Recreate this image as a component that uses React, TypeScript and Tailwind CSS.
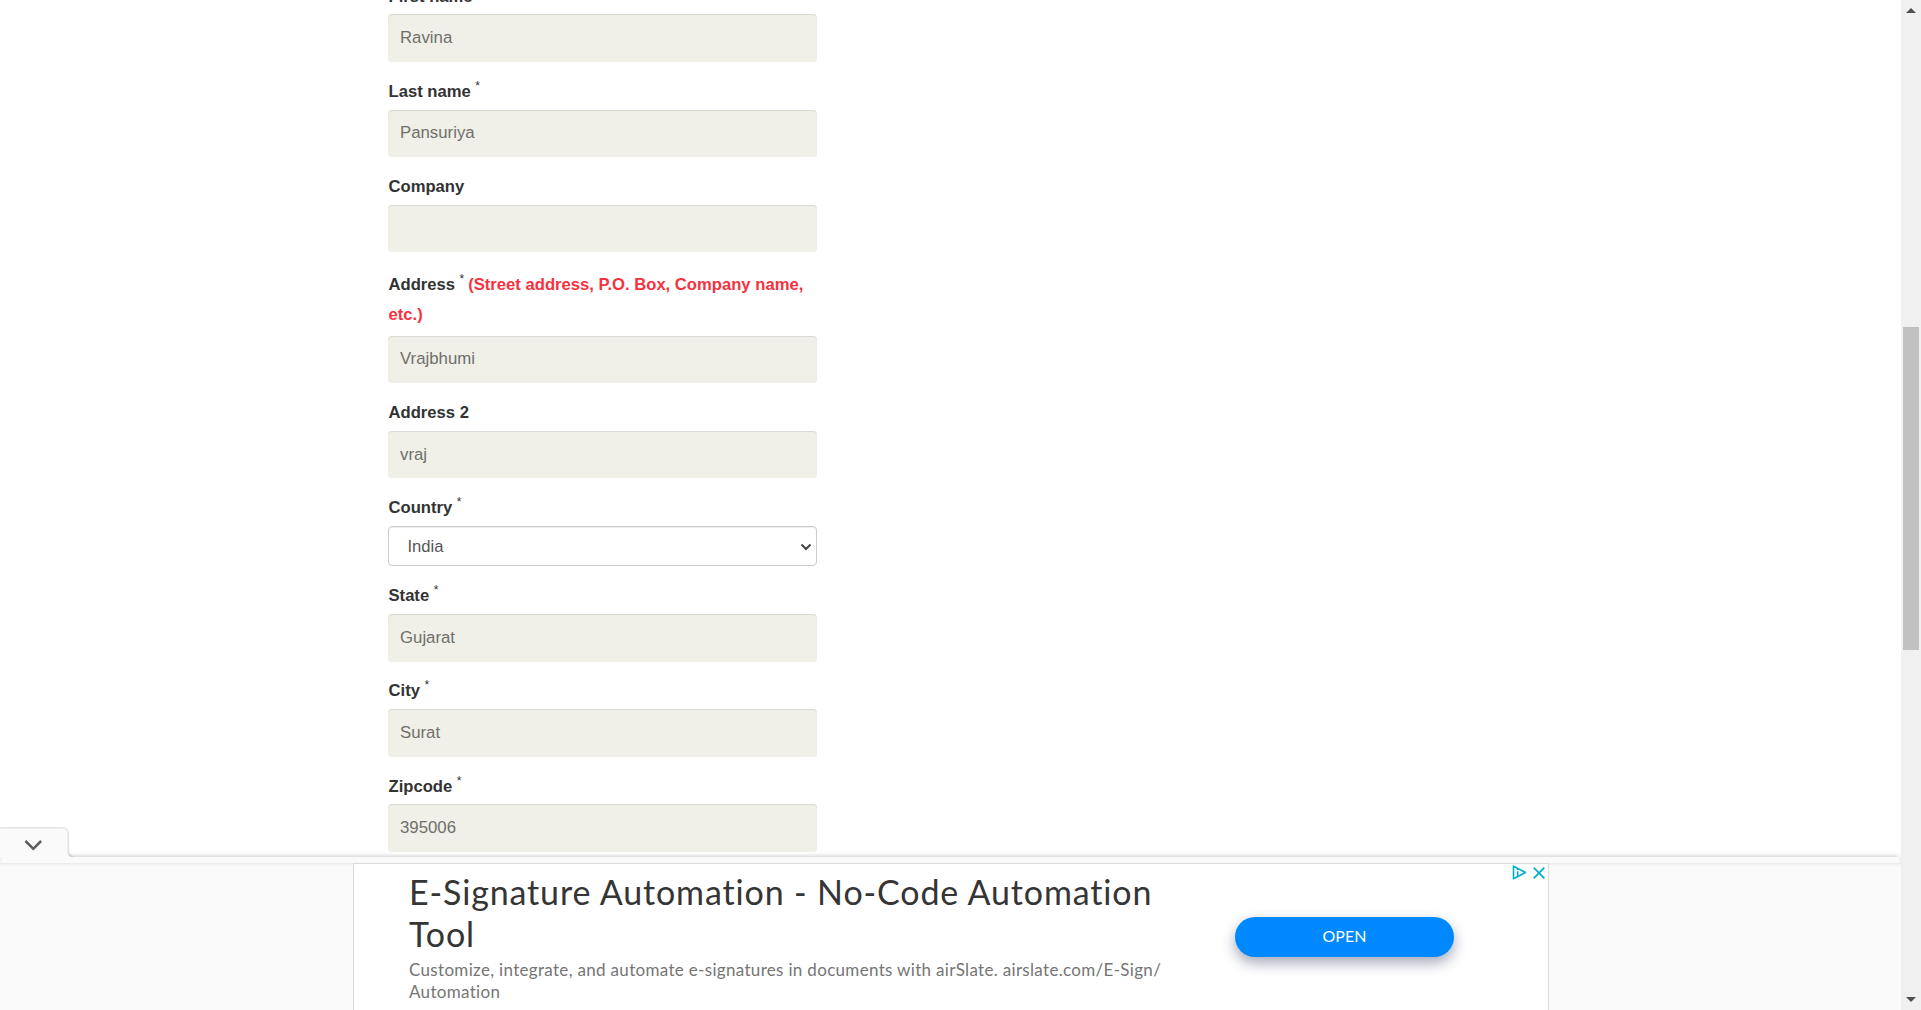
type FieldProps = {
  label: string;
  required?: boolean;
  hint?: string;
  value?: string;
  labelClass?: string;
  inputClass?: string;
  select?: boolean;
};

function Field({ label, required, hint, value, labelClass = "h-12 pb-[3px]", inputClass = "h-[47px]", select }: FieldProps) {
  return (
    <div className="w-[429px]">
      <div className={`flex flex-col justify-end pl-[0.5px] ${labelClass}`}>
        <label className="block text-[16.64px] leading-[30px] font-bold text-[#333]">
          {label}
          {required && <span className="relative -top-[7px] ml-[4.5px] text-[12px] leading-none font-normal">*</span>}
          {hint && <span className="ml-1 text-[#f5333f]">{hint}</span>}
        </label>
      </div>
      {select ? (
        <div className={`flex items-center justify-between rounded-[4px] border border-[#ccc] bg-white pr-1 pl-[18.5px] text-[16.6px] text-[#555] shadow-[inset_0_1px_1px_rgba(0,0,0,0.075)] ${inputClass}`}>
          <span className="pt-[2px]">{value}</span>
          <svg width="12" height="8" viewBox="0 0 12 8" fill="none" stroke="#444" strokeWidth="2">
            <path d="M1.5 1.5 6 6l4.5-4.5" />
          </svg>
        </div>
      ) : (
        <div className={`flex items-center rounded-[4px] bg-[#f0efe8] pl-3 text-[16.8px] text-[#6f6f6b] shadow-[inset_0_1px_1px_rgba(0,0,0,0.1)] ${inputClass}`}>
          {value}
        </div>
      )}
    </div>
  );
}

function Scrollbar() {
  return (
    <div className="flex h-full w-5 shrink-0 flex-col items-center bg-[#f0f0f0]">
      <svg className="mt-2 shrink-0" width="10" height="5" viewBox="0 0 10 5">
        <path d="M5 0 10 5H0z" fill="#505050" />
      </svg>
      <div className="mt-[314px] h-[323px] w-4 bg-[#c1c1c1]" />
      <svg className="mt-auto mb-2 shrink-0" width="10" height="5" viewBox="0 0 10 5">
        <path d="M0 0h10L5 5z" fill="#505050" />
      </svg>
    </div>
  );
}

function AdBar() {
  return (
    <div className="absolute bottom-0 left-0 w-[1901px]">
      <div className="relative z-10 flex h-[30px] w-[80px] overflow-hidden">
        <svg width="80" height="30" viewBox="0 0 80 30" fill="none">
          <defs>
            <filter id="tab" x="-10%" y="-20%" width="130%" height="140%">
              <feDropShadow dx="0" dy="0" stdDeviation="1.2" floodOpacity="0.5" />
            </filter>
          </defs>
          <path d="M-5 40V6Q-5 1.500 2 1.500H62Q67.500 1.500 67.500 7V24Q67.500 30 73 30V40Z" fill="#fafafa" filter="url(#tab)" />
          <path d="M25.500 14 33.300 21.800 41.100 14" stroke="#5c5c5c" strokeWidth="2.500" />
        </svg>
      </div>
      <div className="h-[6px] bg-[#fafafa]">
        <div className="mx-[2px] h-full bg-[#fafafa] shadow-[0_-1px_5px_-1px_rgba(0,0,0,0.3)]" />
      </div>
      <div className="relative flex h-[147px] bg-[#fafafa] bg-[linear-gradient(#e8e8e8,#f3f3f3_1.5px,#fafafa_4px)] pl-[353px]">
        <div className="relative flex w-[1196px] border-x border-t border-[#dcdcdc] bg-white pl-[55px]">
          <div className="w-[800px] shrink-0 whitespace-nowrap font-[Lato,sans-serif]">
            <h2 className="mt-[7px] text-[34px] leading-[42px] tracking-[0.86px] text-[#353535]">
              E-Signature Automation - No-Code Automation
              <br />
              Tool
            </h2>
            <p className="mt-1 text-[17px] leading-[22px] tracking-[0.32px] text-[#757575]">
              Customize, integrate, and automate e-signatures in documents with airSlate. airslate.com/E-Sign/
              <br />
              Automation
            </p>
          </div>
          <button className="mt-[53px] ml-[26px] h-10 w-[219px] rounded-[20px] bg-[#0088ff] pb-[2px] font-[Lato,sans-serif] text-[16px] text-white shadow-[0_6px_14px_rgba(30,40,80,0.4)]">
            OPEN
          </button>
          <div className="absolute top-[1px] right-[3px] flex items-center gap-[6px]">
            <svg width="15" height="15" viewBox="0 0 15 15" fill="none" stroke="#00aecd" strokeWidth="1.600">
              <path d="M1.500 1.200v12.600L13.500 7.500z" strokeLinejoin="round" />
              <path d="M5.700 6.200v5M5.700 3.700v1.300" />
            </svg>
            <svg width="12" height="12" viewBox="0 0 12 12" fill="none" stroke="#00aecd" strokeWidth="1.700">
              <path d="M.7.7l10.600 10.600M11.300.7.7 11.300" />
            </svg>
          </div>
        </div>
      </div>
    </div>
  );
}

export default function App() {
  return (
    <div className="relative flex h-[1010px] w-[1921px] overflow-hidden bg-white font-['Liberation_Sans',Arial,sans-serif]">
      <main className="h-full flex-1 overflow-hidden pl-[388px]">
        <form className="-mt-[34px] flex flex-col">
          <Field label="First name" required value="Ravina" labelClass="h-12 pb-[2px]" inputClass="h-12 pb-[1px]" />
          <Field label="Last name" required value="Pansuriya" inputClass="h-[47px] pb-[2px]" />
          <Field label="Company" />
          <Field label="Address" required hint="(Street address, P.O. Box, Company name, etc.)" value="Vrajbhumi" labelClass="h-[84px] pb-[6px]" inputClass="h-[47px] pb-[2px]" />
          <Field label="Address 2" value="vraj" />
          <Field label="Country" required value="India" select inputClass="h-10 pt-[1px]" />
          <Field label="State" required value="Gujarat" inputClass="h-12" />
          <Field label="City" required value="Surat" labelClass="h-[47px] pb-[3px]" inputClass="h-12 pb-[1px]" />
          <Field label="Zipcode" required value="395006" labelClass="h-[47px] pb-[2px]" inputClass="h-12" />
        </form>
      </main>
      <Scrollbar />
      <AdBar />
    </div>
  );
}
